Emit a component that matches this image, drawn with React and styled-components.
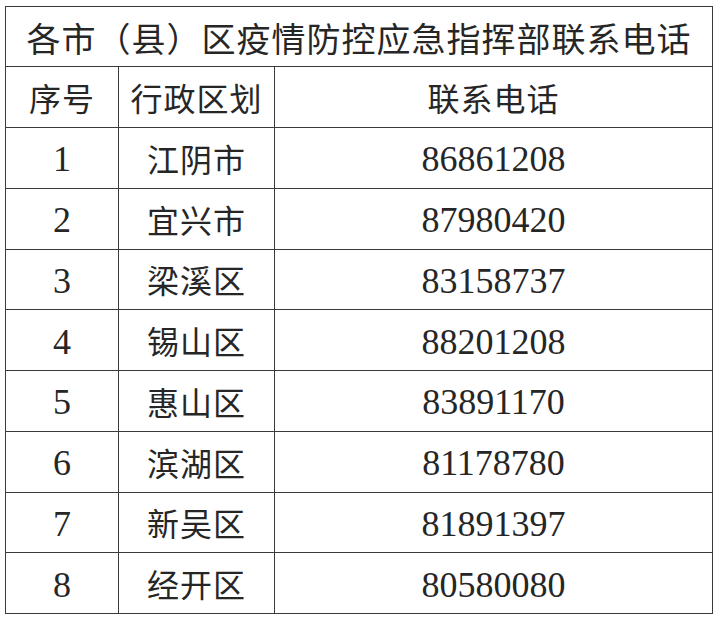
import styled, { createGlobalStyle } from "styled-components";

const GlobalStyle = createGlobalStyle`
  html, body {
    margin: 0;
    padding: 0;
    background: #ffffff;
  }
`;

const Page = styled.div`
  width: 720px;
  height: 621px;
  padding: 6px 0 0 5px;
  box-sizing: border-box;
  background: #fff;
`;

const Table = styled.table`
  width: 707px;
  border-collapse: collapse;
  table-layout: fixed;
  color: #262626;
  font-family: "Liberation Serif", "Noto Sans CJK SC", serif;
`;

const Row = styled.tr`
  height: ${(p) => p.$h || 60.75}px;
`;

const Cell = styled.td`
  border: 1.5px solid #3a3a3a;
  text-align: center;
  vertical-align: middle;
  padding: 0;
  font-size: ${(p) => p.$size || 33}px;
  line-height: 1;
  white-space: nowrap;
`;

const TitleCell = styled(Cell)`
  font-family: "Noto Sans CJK SC", sans-serif;
  font-size: 34px;
  letter-spacing: 1px;
  padding-top: 2px;
`;

const HanCell = styled(Cell)`
  font-family: "Noto Sans CJK SC", sans-serif;
  font-size: 32px;
  letter-spacing: 1px;
`;

const NumCell = styled(Cell)`
  font-family: "Liberation Serif", serif;
  font-size: 36px;
  padding-top: 3px;
`;

const rows = [
  ["1", "江阴市", "86861208"],
  ["2", "宜兴市", "87980420"],
  ["3", "梁溪区", "83158737"],
  ["4", "锡山区", "88201208"],
  ["5", "惠山区", "83891170"],
  ["6", "滨湖区", "81178780"],
  ["7", "新吴区", "81891397"],
  ["8", "经开区", "80580080"],
];

export default function App() {
  return (
    <>
      <GlobalStyle />
      <Page>
        <Table>
          <colgroup>
            <col style={{ width: 113 }} />
            <col style={{ width: 156 }} />
            <col style={{ width: 438 }} />
          </colgroup>
          <tbody>
            <Row $h={60}>
              <TitleCell colSpan={3}>各市（县）区疫情防控应急指挥部联系电话</TitleCell>
            </Row>
            <Row $h={61}>
              <HanCell>序号</HanCell>
              <HanCell>行政区划</HanCell>
              <HanCell>联系电话</HanCell>
            </Row>
            {rows.map(([no, area, phone]) => (
              <Row key={no}>
                <NumCell>{no}</NumCell>
                <HanCell>{area}</HanCell>
                <NumCell>{phone}</NumCell>
              </Row>
            ))}
          </tbody>
        </Table>
      </Page>
    </>
  );
}
